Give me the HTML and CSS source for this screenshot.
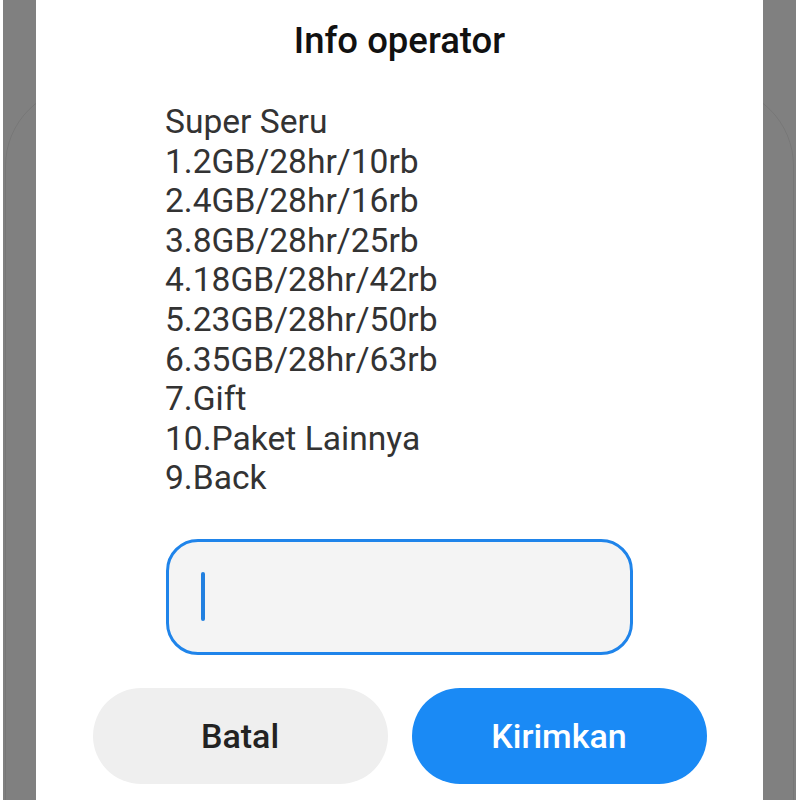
FILE: index.html
```html
<!DOCTYPE html>
<html>
<head>
<meta charset="utf-8">
<link rel="stylesheet" href="styles.css">
</head>
<body>
<div class="screen">
  <div class="backcard"></div>
  <div class="dialog">
    <h1 class="title">Info operator</h1>
    <div class="message">
      <div>Super Seru</div>
      <div>1.2GB/28hr/10rb</div>
      <div>2.4GB/28hr/16rb</div>
      <div>3.8GB/28hr/25rb</div>
      <div>4.18GB/28hr/42rb</div>
      <div>5.23GB/28hr/50rb</div>
      <div>6.35GB/28hr/63rb</div>
      <div>7.Gift</div>
      <div>10.Paket Lainnya</div>
      <div>9.Back</div>
    </div>
    <div class="input"><span class="caret"></span></div>
    <div class="actions">
      <button class="btn btn-cancel">Batal</button>
      <button class="btn btn-send">Kirimkan</button>
    </div>
  </div>
</div>
</body>
</html>
```
FILE: styles.css
```css
html, body {
  margin: 0;
  padding: 0;
  background: #ffffff;
  height: 800px;
  overflow: hidden;
}
.screen {
  position: relative;
  margin: 0 4px 0 3px;
  height: 800px;
  background: #808080;
  display: flex;
  justify-content: flex-start;
  overflow: hidden;
}
.backcard {
  position: absolute;
  left: 2px;
  right: 2px;
  top: 86px;
  height: 900px;
  border-radius: 80px;
  border: 1px solid rgba(0, 0, 0, 0.07);
}
.dialog {
  position: relative;
  width: 727px;
  margin-left: 33px;
  background: #ffffff;
  display: flex;
  flex-direction: column;
  align-items: center;
  font-family: Roboto, "Noto Sans", sans-serif;
}
.title {
  margin: 21px 0 0 0;
  font-size: 36.5px;
  line-height: 40px;
  font-weight: 500;
  color: #111111;
}
.message {
  align-self: stretch;
  margin: 41px 0 0 129px;
  font-size: 33.6px;
  line-height: 39.6px;
  color: #333333;
}
.input {
  margin-top: 41px;
  height: 110px;
  border: 3.5px solid #1f84ea;
  border-radius: 32px;
  background: #f4f4f4;
  display: flex;
  align-items: center;
  padding-left: 32px;
  box-sizing: content-box;
  width: 429px;
}
.caret {
  width: 4px;
  height: 49px;
  border-radius: 2px;
  background: #2280e0;
}
.actions {
  margin-top: 33px;
  display: flex;
  gap: 24px;
}
.btn {
  width: 295px;
  height: 96px;
  border: none;
  border-radius: 48px;
  font-family: Roboto, "Noto Sans", sans-serif;
  font-size: 34px;
  font-weight: 500;
  padding: 0;
}
.btn-cancel {
  background: #efefef;
  color: #222222;
}
.btn-send {
  background: #1a8af5;
  color: #ffffff;
}
```
